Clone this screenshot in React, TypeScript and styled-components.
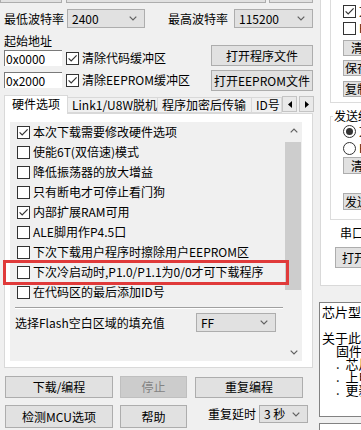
import React from "react";
import styled, { createGlobalStyle } from "styled-components";

const FONT = `"Noto Sans CJK SC", "Noto Sans", sans-serif`;

const GlobalStyle = createGlobalStyle`
  html, body { margin: 0; padding: 0; background: #f0f0f0; }
  body { font-family: ${FONT}; font-size: 12px; color: #000; overflow: hidden; }
  #root { width: 361px; height: 430px; overflow: hidden; }
`;

const Screen = styled.div`
  position: relative;
  display: flex;
  width: 361px;
  height: 430px;
  overflow: hidden;
  background: #f0f0f0;
  font-family: ${FONT};
  font-size: 12px;
  line-height: 14px;
  color: #000;
`;

const LeftCol = styled.div`
  flex: none;
  width: 314px;
  display: flex;
  flex-direction: column;
`;

const TopStrip = styled.div`
  display: flex;
  height: 3px;
`;

const Stub = styled.div<{ $w: number; $ml: number }>`
  flex: none;
  box-sizing: border-box;
  width: ${(p) => p.$w}px;
  margin-left: ${(p) => p.$ml}px;
  height: 3px;
  background: #e1e1e1;
  border: 1px solid #adadad;
  border-top: none;
`;

const Row = styled.div<{ $mt: number; $h: number; $align?: string }>`
  display: flex;
  align-items: ${(p) => p.$align ?? "center"};
  height: ${(p) => p.$h}px;
  margin-top: ${(p) => p.$mt}px;
`;

const Text = styled.span<{ $w?: number; $ml?: number; $lh?: number }>`
  flex: none;
  ${(p) => (p.$w ? `width: ${p.$w}px;` : "")}
  ${(p) => (p.$lh ? `line-height: ${p.$lh}px;` : "")}
  margin-left: ${(p) => p.$ml ?? 0}px;
  white-space: nowrap;
`;

const Combo = styled.div<{ $w: number; $h?: number; $ml?: number }>`
  flex: none;
  box-sizing: border-box;
  width: ${(p) => p.$w}px;
  height: ${(p) => p.$h ?? 19}px;
  margin-left: ${(p) => p.$ml ?? 0}px;
  background: #e1e1e1;
  border: 1px solid #adadad;
  display: flex;
  align-items: center;
  justify-content: space-between;
  padding: 0 7px 0 4px;
  white-space: nowrap;
`;

const Btn = styled.div<{ $w: number; $h: number; $ml?: number; $mt?: number; $disabled?: boolean }>`
  flex: none;
  box-sizing: border-box;
  width: ${(p) => p.$w}px;
  height: ${(p) => p.$h}px;
  margin-left: ${(p) => p.$ml ?? 0}px;
  margin-top: ${(p) => p.$mt ?? 0}px;
  display: flex;
  align-items: center;
  justify-content: center;
  background: ${(p) => (p.$disabled ? "#cccccc" : "#e1e1e1")};
  border: 1px solid ${(p) => (p.$disabled ? "#bfbfbf" : "#adadad")};
  color: ${(p) => (p.$disabled ? "#838383" : "#000")};
  white-space: nowrap;
  overflow: hidden;
`;

const Edit = styled.div<{ $w: number }>`
  flex: none;
  box-sizing: border-box;
  width: ${(p) => p.$w}px;
  height: 16px;
  background: #fff;
  border-top: 1px solid #7a7a7a;
  border-left: 1px solid #7a7a7a;
  display: flex;
  align-items: center;
  padding-left: 1px;
  white-space: nowrap;
`;

const CheckBox = styled.span<{ $ml?: number }>`
  flex: none;
  box-sizing: border-box;
  width: 13px;
  height: 13px;
  margin-left: ${(p) => p.$ml ?? 0}px;
  border: 1px solid #333;
  background: #fff;
  display: inline-flex;
  align-items: center;
  justify-content: center;
`;

const RadioBox = styled.span`
  flex: none;
  box-sizing: border-box;
  width: 13px;
  height: 13px;
  border: 1px solid #333;
  border-radius: 50%;
  background: #fff;
  display: inline-flex;
  align-items: center;
  justify-content: center;
`;

const RadioDot = styled.span`
  width: 7px;
  height: 7px;
  border-radius: 50%;
  background: #333;
`;

const Chevron = ({ up, color = "#606060" }: { up?: boolean; color?: string }) => (
  <svg width="8" height="5" viewBox="0 0 8 5">
    <path
      d={up ? "M0.7 4.3 L4 1 L7.3 4.3" : "M0.7 0.7 L4 4 L7.3 0.7"}
      stroke={color}
      strokeWidth="1.2"
      fill="none"
    />
  </svg>
);

const Check = ({ checked, ml }: { checked?: boolean; ml?: number }) => (
  <CheckBox $ml={ml}>
    {checked && (
      <svg width="11" height="11" viewBox="0 0 11 11">
        <path d="M1.6 5.4 L4.2 8 L9.6 2.4" stroke="#333" strokeWidth="1.2" fill="none" />
      </svg>
    )}
  </CheckBox>
);

const Radio = ({ checked }: { checked?: boolean }) => (
  <RadioBox>{checked && <RadioDot />}</RadioBox>
);

/* address block */
const AddrBlock = styled.div`
  display: flex;
  margin-top: 6px;
  padding-left: 4px;
`;
const AddrLeft = styled.div`
  flex: none;
  width: 207px;
  display: flex;
  flex-direction: column;
`;
const AddrRight = styled.div`
  flex: none;
  width: 102px;
  display: flex;
  flex-direction: column;
  gap: 4px;
  padding-top: 11px;
`;

/* tabs */
const TabStrip = styled.div`
  position: relative;
  z-index: 1;
  display: flex;
  align-items: flex-end;
  height: 18px;
  margin-top: 4px;
  padding-left: 4px;
`;
const Tab = styled.div<{ $w: number; $active?: boolean }>`
  flex: none;
  box-sizing: border-box;
  width: ${(p) => p.$w}px;
  height: ${(p) => (p.$active ? 19 : 16)}px;
  margin-bottom: ${(p) => (p.$active ? -1 : 0)}px;
  margin-right: -1px;
  background: ${(p) => (p.$active ? "#fff" : "#f0f0f0")};
  border: 1px solid #d9d9d9;
  border-bottom: ${(p) => (p.$active ? "none" : "1px solid #d9d9d9")};
  display: flex;
  align-items: center;
  justify-content: ${(p) => (p.$active ? "center" : "flex-start")};
  padding-left: ${(p) => (p.$active ? 0 : 4)}px;
  padding-bottom: ${(p) => (p.$active ? 2 : 0)}px;
  white-space: nowrap;
  overflow: hidden;
`;
const TabArrows = styled.div`
  flex: none;
  display: flex;
  margin-left: 1px;
  align-self: flex-start;
  margin-top: 1px;
  gap: 2px;
`;
const TabArrow = styled.div`
  box-sizing: border-box;
  width: 15px;
  height: 16px;
  background: #e9e9e9;
  border: 1px solid #c4c4c4;
  display: flex;
  align-items: center;
  justify-content: center;
`;

const TabPage = styled.div`
  box-sizing: border-box;
  margin-left: 4px;
  width: 309px;
  height: 255px;
  background: #fff;
  border: 1px solid #d9d9d9;
  padding: 8px 0 0 5px;
`;

const ScrollArea = styled.div`
  display: flex;
  width: 292px;
  height: 239px;
  background: #f0f0f0;
`;

const ScrollContent = styled.div`
  flex: 1;
  display: flex;
  flex-direction: column;
  padding-left: 7px;
`;

const CheckRow = styled.div`
  display: flex;
  align-items: center;
  height: 20px;
  gap: 3px;
  white-space: nowrap;
`;

const Separator = styled.div`
  margin: 5px 2px 0 -2px;
  border-top: 1px solid #a0a0a0;
  border-bottom: 1px solid #fff;
`;

const FlashRow = styled.div`
  display: flex;
  align-items: center;
  height: 19px;
  margin: 4px 0 0 -2px;
`;

const ScrollBar = styled.div`
  flex: none;
  width: 17px;
  display: flex;
  flex-direction: column;
  background: #f0f0f0;
`;
const ScrollBtn = styled.div`
  height: 17px;
  display: flex;
  align-items: center;
  justify-content: center;
`;
const ScrollThumb = styled.div`
  margin: 3px 1px 0 0;
  height: 148px;
  background: #cdcdcd;
`;
const ScrollTrack = styled.div`
  flex: 1;
`;

/* right column */
const RightCol = styled.div`
  flex: none;
  width: 47px;
  display: flex;
  flex-direction: column;
  overflow: hidden;
`;
const RightPage = styled.div`
  flex: none;
  box-sizing: border-box;
  margin-left: 6px;
  width: 90px;
  height: 286px;
  background: #fff;
  border: 1px solid #d9d9d9;
  border-top: none;
  padding-left: 9px;
  display: flex;
  flex-direction: column;
  overflow: hidden;
`;
const Group = styled.div<{ $mt?: number; $h: number; $open?: boolean }>`
  position: relative;
  flex: none;
  box-sizing: border-box;
  height: ${(p) => p.$h}px;
  margin-top: ${(p) => p.$mt ?? 0}px;
  border: 1px solid #dcdcdc;
  ${(p) => (p.$open ? "border-top: none;" : "")}
  padding: ${(p) => (p.$open ? "4px 0 0 12px" : "5px 0 0 12px")};
  display: flex;
  flex-direction: column;
`;
const GroupLegend = styled.span`
  position: absolute;
  top: -7px;
  left: 2px;
  padding: 0 1px;
  background: #fff;
  line-height: 12px;
  white-space: nowrap;
`;
const SmallRow = styled.div<{ $h: number; $mt?: number }>`
  flex: none;
  display: flex;
  align-items: center;
  gap: 3px;
  height: ${(p) => p.$h}px;
  margin-top: ${(p) => p.$mt ?? 0}px;
  white-space: nowrap;
`;

const InfoBox = styled.div`
  flex: none;
  box-sizing: border-box;
  margin: 16px 0 0 5px;
  width: 120px;
  height: 115px;
  background: #fff;
  border: 1px solid #828282;
  padding: 2px 0 0 2px;
  font-size: 13px;
  line-height: 13px;
  display: flex;
  flex-direction: column;
`;
const InfoLine = styled.div<{ $indent?: number }>`
  height: 13px;
  padding-left: ${(p) => p.$indent ?? 0}px;
  white-space: pre;
`;
const InfoBoxBelow = styled.div`
  flex: none;
  box-sizing: border-box;
  margin: 6px 0 0 5px;
  width: 120px;
  height: 20px;
  background: #fff;
  border: 1px solid #828282;
`;

const Highlight = styled.div`
  position: absolute;
  left: 3px;
  top: 260px;
  width: 286px;
  height: 25px;
  box-sizing: border-box;
  border: 3px solid #e03a3a;
  pointer-events: none;
`;

const options: [boolean, string][] = [
  [true, "本次下载需要修改硬件选项"],
  [false, "使能6T(双倍速)模式"],
  [false, "降低振荡器的放大增益"],
  [false, "只有断电才可停止看门狗"],
  [true, "内部扩展RAM可用"],
  [false, "ALE脚用作P4.5口"],
  [false, "下次下载用户程序时擦除用户EEPROM区"],
  [false, "下次冷启动时,P1.0/P1.1为0/0才可下载程序"],
  [false, "在代码区的最后添加ID号"],
];

export default function App() {
  return (
    <>
      <GlobalStyle />
      <Screen>
        <LeftCol>
          <TopStrip>
            <Stub $w={62} $ml={0} />
            <Stub $w={200} $ml={4} />
            <Stub $w={44} $ml={3} />
          </TopStrip>

          <Row $mt={6} $h={19}>
            <Text $w={63} $ml={4}>最低波特率</Text>
            <Combo $w={78}>
              <span>2400</span>
              <Chevron />
            </Combo>
            <Text $w={66} $ml={23}>最高波特率</Text>
            <Combo $w={79}>
              <span>115200</span>
              <Chevron />
            </Combo>
          </Row>

          <AddrBlock>
            <AddrLeft>
              <Row $mt={0} $h={14}>
                <Text>起始地址</Text>
              </Row>
              <Row $mt={2} $h={16}>
                <Edit $w={58}>0x0000</Edit>
                <Check checked ml={4} />
                <Text $ml={3}>清除代码缓冲区</Text>
              </Row>
              <Row $mt={6} $h={16}>
                <Edit $w={58}>0x2000</Edit>
                <Check checked ml={4} />
                <Text $ml={3}>清除EEPROM缓冲区</Text>
              </Row>
            </AddrLeft>
            <AddrRight>
              <Btn $w={102} $h={21}>打开程序文件</Btn>
              <Btn $w={102} $h={21}>打开EEPROM文件</Btn>
            </AddrRight>
          </AddrBlock>

          <TabStrip>
            <Tab $w={64} $active>硬件选项</Tab>
            <Tab $w={91}>Link1/U8W脱机</Tab>
            <Tab $w={95}>程序加密后传输</Tab>
            <Tab $w={31}>ID号</Tab>
            <TabArrows>
              <TabArrow>
                <svg width="4" height="7" viewBox="0 0 4 7">
                  <path d="M4 0 L0 3.5 L4 7 Z" fill="#000" />
                </svg>
              </TabArrow>
              <TabArrow>
                <svg width="4" height="7" viewBox="0 0 4 7">
                  <path d="M0 0 L4 3.5 L0 7 Z" fill="#000" />
                </svg>
              </TabArrow>
            </TabArrows>
          </TabStrip>

          <TabPage>
            <ScrollArea>
              <ScrollContent>
                {options.map(([c, t]) => (
                  <CheckRow key={t}>
                    <Check checked={c} />
                    <span>{t}</span>
                  </CheckRow>
                ))}
                <Separator />
                <FlashRow>
                  <Text $w={181}>选择Flash空白区域的填充值</Text>
                  <Combo $w={80}>
                    <span>FF</span>
                    <Chevron />
                  </Combo>
                </FlashRow>
              </ScrollContent>
              <ScrollBar>
                <ScrollBtn>
                  <Chevron up />
                </ScrollBtn>
                <ScrollThumb />
                <ScrollTrack />
                <ScrollBtn>
                  <Chevron />
                </ScrollBtn>
              </ScrollBar>
            </ScrollArea>
          </TabPage>

          <Row $mt={8} $h={22}>
            <Btn $w={108} $h={22} $ml={5}>下载/编程</Btn>
            <Btn $w={67} $h={22} $ml={7} $disabled>停止</Btn>
            <Btn $w={108} $h={21} $ml={8}>重复编程</Btn>
          </Row>
          <Row $mt={7} $h={23} $align="flex-start">
            <Btn $w={108} $h={23} $ml={5}>检测MCU选项</Btn>
            <Btn $w={67} $h={23} $ml={7}>帮助</Btn>
            <Text $w={51} $ml={21} $lh={18}>重复延时</Text>
            <Combo $w={49} $h={18}>
              <span>3 秒</span>
              <Chevron />
            </Combo>
          </Row>
        </LeftCol>

        <RightCol>
          <RightPage>
            <Group $open $h={103}>
              <SmallRow $h={14}>
                <Check checked />
                <span>文本模式</span>
              </SmallRow>
              <SmallRow $h={14} $mt={3}>
                <Check />
                <span>HEX模式</span>
              </SmallRow>
              <Btn $w={76} $h={16} $mt={5}>清空接收区</Btn>
              <Btn $w={76} $h={16} $mt={4}>保存接收数据</Btn>
              <Btn $w={76} $h={16} $mt={5}>复制接收数据</Btn>
            </Group>
            <Group $mt={13} $h={104}>
              <GroupLegend>发送缓冲区</GroupLegend>
              <SmallRow $h={18}>
                <Radio checked />
                <span>文本模式</span>
              </SmallRow>
              <SmallRow $h={16}>
                <Radio />
                <span>HEX模式</span>
              </SmallRow>
              <Btn $w={76} $h={17} $mt={1}>清空发送区</Btn>
              <Btn $w={76} $h={17} $mt={19}>发送文件数据</Btn>
            </Group>
            <SmallRow $h={12} $mt={7}>
              <Text $ml={10}>串口</Text>
            </SmallRow>
            <Btn $w={62} $h={21} $mt={8} $ml={5}>打开串口</Btn>
          </RightPage>
          <InfoBox>
            <InfoLine>芯片型号：STC89C52RC</InfoLine>
            <InfoLine />
            <InfoLine>关于此芯片的说明：</InfoLine>
            <InfoLine $indent={14}>固件版本号</InfoLine>
            <InfoLine $indent={14}>{".  芯片出厂"}</InfoLine>
            <InfoLine $indent={14}>{".  上电复位"}</InfoLine>
            <InfoLine $indent={14}>{".  更新固件"}</InfoLine>
          </InfoBox>
          <InfoBoxBelow />
        </RightCol>

        <Highlight />
      </Screen>
    </>
  );
}
